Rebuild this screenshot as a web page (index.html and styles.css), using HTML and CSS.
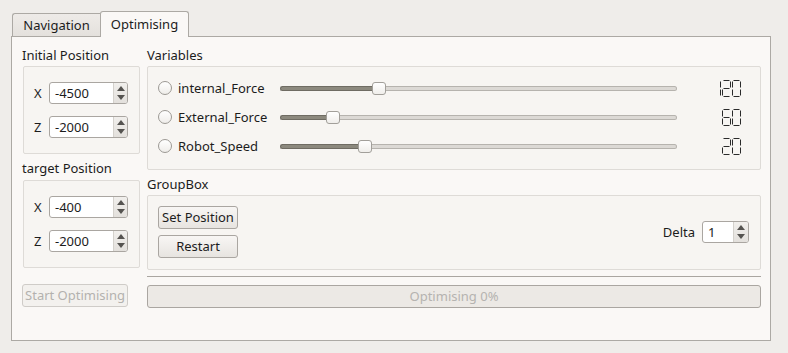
FILE: index.html
```html
<html>

<head>
  <meta charset="UTF-8">
  <title>Optimiser</title>
  <link rel="stylesheet" href="styles.css">
</head>

<body>

  <div class="tabbar">
    <div class="tab">Navigation</div>
    <div class="tab active">Optimising</div>
  </div>

  <div class="pane">

    <!-- left column -->
    <div class="col-left">
      <div class="title t-first">Initial Position</div>
      <div class="frame posbox">
        <span class="axis">X</span>
        <div class="spin"><span class="val">-4500</span><span class="arrows"><i class="up"></i><i class="down"></i></span></div>
        <span class="axis">Z</span>
        <div class="spin"><span class="val">-2000</span><span class="arrows"><i class="up"></i><i class="down"></i></span></div>
      </div>

      <div class="title t-second">target Position</div>
      <div class="frame posbox">
        <span class="axis">X</span>
        <div class="spin"><span class="val">-400</span><span class="arrows"><i class="up"></i><i class="down"></i></span></div>
        <span class="axis">Z</span>
        <div class="spin"><span class="val">-2000</span><span class="arrows"><i class="up"></i><i class="down"></i></span></div>
      </div>

      <div class="btn disabled start">Start Optimising</div>
    </div>

    <!-- right column -->
    <div class="col-right">
      <div class="title t-first">Variables</div>
      <div class="frame vars">

        <div class="var">
          <span class="radio"></span><span class="vname">internal_Force</span>
        </div>
        <div class="slider">
          <span class="fill" style="width: 94px"></span><span class="handle"></span><span class="rest"></span>
        </div>
        <div class="lcd">
          <svg width="30" height="17" viewBox="0 0 30 17">
            <path d="M8.5 1.5V7.5M8.5 9.5V15.5" />
            <path d="M11.5 0.5H17.5M18.5 1.5V7.5M11.5 8.5H17.5M10.5 9.5V15.5M11.5 16.5H17.5" />
            <path d="M21.5 0.5H27.5M28.5 1.5V7.5M28.5 9.5V15.5M21.5 16.5H27.5M20.5 9.5V15.5M20.5 1.5V7.5" />
          </svg>
        </div>

        <div class="var">
          <span class="radio"></span><span class="vname">External_Force</span>
        </div>
        <div class="slider">
          <span class="fill" style="width: 48px"></span><span class="handle"></span><span class="rest"></span>
        </div>
        <div class="lcd">
          <svg width="30" height="17" viewBox="0 0 30 17">
            <path d="M11.5 0.5H17.5M10.5 1.5V7.5M11.5 8.5H17.5M10.5 9.5V15.5M11.5 16.5H17.5M18.5 9.5V15.5" />
            <path d="M21.5 0.5H27.5M28.5 1.5V7.5M28.5 9.5V15.5M21.5 16.5H27.5M20.5 9.5V15.5M20.5 1.5V7.5" />
          </svg>
        </div>

        <div class="var">
          <span class="radio"></span><span class="vname">Robot_Speed</span>
        </div>
        <div class="slider">
          <span class="fill" style="width: 80px"></span><span class="handle"></span><span class="rest"></span>
        </div>
        <div class="lcd">
          <svg width="30" height="17" viewBox="0 0 30 17">
            <path d="M11.5 0.5H17.5M18.5 1.5V7.5M11.5 8.5H17.5M10.5 9.5V15.5M11.5 16.5H17.5" />
            <path d="M21.5 0.5H27.5M28.5 1.5V7.5M28.5 9.5V15.5M21.5 16.5H27.5M20.5 9.5V15.5M20.5 1.5V7.5" />
          </svg>
        </div>

      </div>

      <div class="title t-group">GroupBox</div>
      <div class="frame groupbox">
        <div class="btns">
          <div class="btn">Set Position</div>
          <div class="btn">Restart</div>
        </div>
        <div class="delta">
          <span>Delta</span>
          <div class="spin small"><span class="val">1</span><span class="arrows"><i class="up"></i><i class="down"></i></span></div>
        </div>
      </div>

      <div class="line"></div>
      <div class="progress">Optimising 0%</div>
    </div>

  </div>

</body>

</html>
```

FILE: styles.css
```css
/* reset */
* {
  margin: 0;
  padding: 0;
  box-sizing: border-box;
}
body {
  background: #efedea;
  font-family: "Noto Sans", "Open Sans", sans-serif;
  font-size: 13px;
  color: #1c1c1c;
  overflow: hidden;
}

/* tabs */
.tabbar {
  display: flex;
  align-items: flex-end;
  padding: 11px 0 0 12px;
  height: 37px;
}
.tab {
  width: 88px;
  height: 24px;
  line-height: 22px;
  text-align: center;
  background: linear-gradient(#eeebe8, #e4e1dd);
  border: 1px solid #aca9a4;
  border-right: none;
  border-radius: 3px 0 0 0;
}
.tab.active {
  width: 89px;
  height: 26px;
  line-height: 24px;
  background: #faf8f6;
  border-right: 1px solid #aca9a4;
  border-bottom: none;
  border-radius: 3px 3px 0 0;
  position: relative;
  z-index: 1;
}

.pane {
  margin: -1px 17px 0 11px;
  height: 305px;
  background: #faf8f6;
  border: 1px solid #aca9a4;
  display: flex;
  gap: 7px;
  padding: 0 9px 0 10px;
}

/* titles */
.title {
  line-height: 17px;
}
.t-first {
  padding: 10px 0 2px;
}
.t-second {
  padding: 6px 0 3px;
}
.t-group {
  padding: 6px 0 2px;
}

.frame {
  border: 1px solid #dedbd7;
  border-radius: 2px;
  background: #f7f5f2;
}

/* left column */
.col-left {
  width: 118px;
  display: flex;
  flex-direction: column;
}
.col-left .frame {
  margin-left: 1px;
}
.posbox {
  display: grid;
  grid-template-columns: 15px 79px;
  row-gap: 12px;
  align-items: center;
  padding: 15px 10px 15px 10px;
}
.posbox:first-of-type {
  padding-bottom: 16px;
}
.axis {
  line-height: 22px;
}

/* spin box */
.spin {
  display: flex;
  height: 22px;
  background: #fff;
  border: 1px solid #aaa6a1;
  border-radius: 3px;
  overflow: hidden;
}
.spin .val {
  flex: 1;
  line-height: 20px;
  padding-left: 5px;
}
.spin .arrows {
  width: 14px;
  background: linear-gradient(#f1efec, #e3e0dc);
  border-left: 1px solid #d4d1cc;
  display: flex;
  flex-direction: column;
  align-items: center;
  justify-content: center;
  gap: 4px;
}
.arrows i {
  width: 0;
  height: 0;
  border-left: 4px solid transparent;
  border-right: 4px solid transparent;
}
.arrows .up {
  border-bottom: 5px solid #555350;
}
.arrows .down {
  border-top: 5px solid #555350;
}

/* buttons */
.btn {
  height: 23px;
  line-height: 21px;
  text-align: center;
  border: 1px solid #aaa6a1;
  border-radius: 3px;
  background: linear-gradient(#f8f6f4, #e7e4e0);
}
.btn.disabled {
  color: #b3b1ae;
  border-color: #cfccc8;
  background: #f3f1ee;
}
.start {
  width: 106px;
  margin-top: 16px;
}

/* right column */
.col-right {
  flex: 1;
  display: flex;
  flex-direction: column;
}
.vars {
  display: grid;
  grid-template-columns: 122px 397px 1fr;
  grid-auto-rows: 22px;
  row-gap: 7px;
  align-items: center;
  padding: 10px 18px 12px 10px;
}
.var {
  display: flex;
  align-items: center;
}
.radio {
  width: 14px;
  height: 14px;
  border: 1px solid #9c9994;
  border-radius: 50%;
  background: linear-gradient(#ffffff, #efedea);
  margin-right: 6px;
}
.slider {
  display: flex;
  align-items: center;
  height: 14px;
}
.slider .fill {
  height: 5px;
  background: #8c897e;
  border: 1px solid #6f6c63;
  border-right: none;
  border-radius: 3px 0 0 3px;
  margin-right: -2px;
}
.slider .rest {
  flex: 1;
  height: 5px;
  background: #dcd9d5;
  border: 1px solid #b6b3ae;
  border-left: none;
  border-radius: 0 3px 3px 0;
  margin-left: -2px;
}
.slider .handle {
  width: 14px;
  height: 13px;
  background: linear-gradient(#ffffff, #f0eeeb);
  border: 1px solid #a29f9a;
  border-radius: 3px;
  position: relative;
  z-index: 1;
}
.lcd {
  display: flex;
  justify-content: flex-end;
}
.lcd svg {
  fill: none;
  stroke: #2a2a2a;
  stroke-width: 1;
}

.groupbox {
  display: flex;
  justify-content: space-between;
  align-items: center;
  padding: 10px 11px 11px 10px;
}
.btns {
  width: 80px;
  display: flex;
  flex-direction: column;
  gap: 6px;
}
.delta {
  display: flex;
  align-items: center;
  gap: 7px;
}
.spin.small {
  width: 47px;
}
.spin.small .arrows {
  width: 15px;
}

.line {
  height: 1px;
  background: #aaa6a1;
  margin-top: 6px;
}
.progress {
  height: 23px;
  margin-top: 8px;
  line-height: 21px;
  text-align: center;
  color: #b5b3b0;
  background: #ece9e5;
  border: 1px solid #aaa6a1;
  border-radius: 3px;
}
```
